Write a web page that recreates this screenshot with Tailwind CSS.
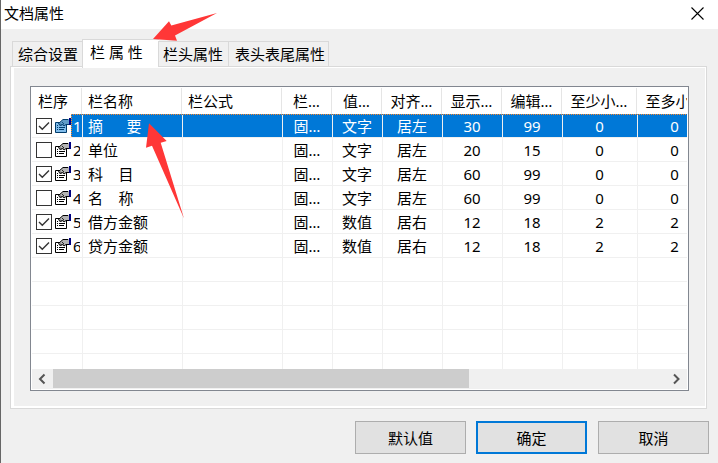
<!DOCTYPE html>
<html lang="zh-CN">
<head>
<meta charset="utf-8">
<title>文档属性</title>
<script src="https://cdn.jsdelivr.net/npm/@tailwindcss/browser@4"></script>
</head>
<body class="w-[718px] h-[463px] overflow-hidden">
<svg width="0" height="0" class="absolute">
  <symbol id="prop" viewBox="0 0 17 16">
    <path d="M1.5 4.5H12.5V14.5H1.5Z" fill="var(--paper)" stroke="var(--ink)"/>
    <path d="M3 7.5h1M3 9.5h1M5 9.5h6M3 11.5h1M5 11.5h5" stroke="var(--ink)"/>
    <path d="M4.500 5.500L9 1.500H15V6.500H12L10 8L8.500 6L6.500 8Z" fill="var(--hand)" stroke="var(--ink)"/>
    <path d="M6 5.500L8 7.500M8 4L10 6" stroke="var(--ink)" stroke-width=".8"/>
    <path d="M14.500 1V6" stroke="var(--hand)"/>
    <path d="M16 0V7" stroke="#000080" stroke-width="2"/>
  </symbol>
</svg>
<div class="relative flex flex-col w-[718px] h-[463px] bg-[#f0f0f0] border-l border-[#666] text-black text-[15px] leading-[22px] font-['Noto_Sans','Noto_Sans_CJK_SC',sans-serif]">
  <header class="flex items-center justify-between h-[29px] shrink-0 bg-white pl-[3px] pr-[14px] pb-[2px]">
    <h1 class="-mt-[2px]">文档属性</h1>
    <svg class="w-[13px] h-[13px]" viewBox="0 0 13 13"><path d="M.5 .5l12 12M12.500 .5l-12 12" stroke="#000" stroke-width="1.1"/></svg>
  </header>
  <nav class="flex items-end h-[38px] shrink-0 pl-[11px] relative z-10 whitespace-nowrap">
    <div class="w-[70px] h-[26px] border-t border-l border-b border-[#d9d9d9] pl-[5px] pt-px">综合设置</div>
    <div class="w-[77px] h-[29px] -mb-px border-t border-l border-[#d9d9d9] bg-white pl-[7px] pt-px">栏 属 性</div>
    <div class="w-[71px] h-[26px] -ml-px border border-[#d9d9d9] pl-[4px] pt-px">栏头属性</div>
    <div class="w-[101px] h-[26px] -ml-px border border-[#d9d9d9] pl-[6px] pt-px">表头表尾属性</div>
  </nav>
  <main class="w-[697px] h-[343px] shrink-0 -mt-px ml-[9px] border border-[#d9d9d9] bg-white pt-px pl-[3px] pr-px pb-[2px]">
    <div class="h-full bg-[#f0f0f0] pt-[18px] pl-[16px]">
      <section class="w-[659px] h-[305px] border border-[#828790] bg-white p-px flex flex-col overflow-hidden">
        <div id="head" class="flex h-[26px] shrink-0 w-[655px] overflow-hidden whitespace-pre"></div>
        <div id="rows" class="relative h-[255px] shrink-0 w-[655px] overflow-hidden whitespace-pre leading-[24px]"></div>
        <div class="flex h-[20px] shrink-0 w-[655px] bg-[#f0f0f0]">
          <svg class="w-[21px] h-[20px] shrink-0" viewBox="0 0 21 20"><path d="M12.500 5.500L8 10l4.500 4.500" fill="none" stroke="#555" stroke-width="2"/></svg>
          <div class="w-[416px] h-[19px] bg-[#cdcdcd]"></div>
          <div class="flex-1"></div>
          <svg class="w-[21px] h-[20px] shrink-0" viewBox="0 0 21 20"><path d="M8 5.500L12.500 10L8 14.500" fill="none" stroke="#555" stroke-width="2"/></svg>
        </div>
      </section>
    </div>
  </main>
  <footer class="flex gap-[11px] mt-[12px] pl-[354px]">
    <button class="w-[111px] h-[33px] border border-[#adadad] bg-[#e1e1e1] -mr-px">默认值</button>
    <button class="w-[111px] h-[33px] border-2 border-[#0078d7] bg-[#e1e1e1]">确定</button>
    <button class="w-[111px] h-[33px] border border-[#adadad] bg-[#e1e1e1]">取消</button>
  </footer>
  <svg class="absolute top-0 -left-px w-[718px] h-[463px] z-20 pointer-events-none" viewBox="0 0 718 463" fill="#ff3737">
    <path d="M153 39L169 21.300L171.300 25.500L217 13L175 35.500L177 40.700Z"/>
    <path d="M149 123.300L166.700 141L160.700 142.700L184 218.500L152 145.700L146 147.700Z"/>
  </svg>
</div>
<script>
const widths = [50, 100, 100, 50, 50, 60, 60, 60, 75, 75];
const titles = ['栏序', '栏名称', '栏公式', '栏…', '值…', '对齐…', '显示…', '编辑…', '至少小…', '至多小…'];
const data = [
  [1, '1', '摘      要', '', '固…', '文字', '居左', '30', '99', '0', '0'],
  [0, '2', '单位', '', '固…', '文字', '居左', '20', '15', '0', '0'],
  [1, '3', '科    目', '', '固…', '文字', '居左', '60', '99', '0', '0'],
  [0, '4', '名    称', '', '固…', '文字', '居左', '60', '99', '0', '0'],
  [1, '5', '借方金额', '', '固…', '数值', '居右', '12', '18', '2', '2'],
  [1, '6', '贷方金额', '', '固…', '数值', '居右', '12', '18', '2', '2'],
  [], [], [], [], []
];
document.getElementById('head').innerHTML = titles.map((t, i) =>
  `<div class="shrink-0 h-full border-r border-[#e5e5e5] pt-[2px] overflow-hidden ${i < 3 ? 'pl-[6px]' : 'text-center'}" style="width:${widths[i]}px">${t}</div>`).join('');
document.getElementById('rows').innerHTML = data.map((r, ri) => {
  const sel = ri === 0;
  const first = r.length ? `<div class="flex items-center w-[50px] shrink-0 h-full pl-[4px]"><span class="w-[16px] h-[16px] shrink-0 border border-[#333] bg-white">${r[0] ? '<svg class="w-[14px] h-[14px]" viewBox="0 0 14 14"><path d="M2 7l3.300 3.300L12 3.600" fill="none" stroke="#333" stroke-width="1.4"/></svg>' : ''}</span><svg class="w-[17px] h-[16px] shrink-0 ml-[2px] ${sel ? '[--paper:#80bceb] [--ink:#003c6c] [--hand:#609cc8]' : '[--paper:#fff] [--ink:#000] [--hand:#b4b4b4]'}"><use href="#prop"/></svg><span class="h-full overflow-hidden pl-[2px] ${sel ? 'w-[11px] bg-[#0078d7] text-white' : 'w-[9px]'}">${r[1]}</span></div>`
    : '<div class="w-[50px] shrink-0"></div>';
  const cells = widths.slice(1).map((w, i) =>
    `<div class="shrink-0 h-full border-l border-[#f0f0f0] overflow-hidden ${i < 2 ? 'pl-[5px]' : 'text-center pr-px'} ${sel ? 'bg-[#0078d7] text-white' : ''}" style="width:${w}px">${r[i + 2] || ''}</div>`).join('');
  return `<div class="flex h-[24px] border-b border-[#f0f0f0]">${first}${cells}</div>`;
}).join('') +
  '<div class="absolute top-0 left-[39px] right-0 h-px bg-[repeating-linear-gradient(90deg,#ff8728_0_1px,#0078d7_1px_2px)]"></div>' +
  '<div class="absolute top-0 left-[39px] w-px h-[23px] bg-[repeating-linear-gradient(180deg,#ff8728_0_1px,#0078d7_1px_2px)]"></div>';
</script>
</body>
</html>
